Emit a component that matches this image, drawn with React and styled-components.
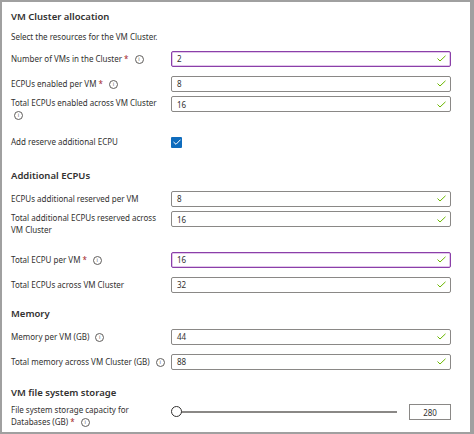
import React from "react";
import styled, { createGlobalStyle } from "styled-components";

const G = createGlobalStyle`
  html,body{margin:0;padding:0;background:#fff;}
  body{font-family:"Noto Sans","Open Sans",sans-serif;color:#323130;}
`;
const Frame = styled.div`
  width:474px;height:434px;box-sizing:border-box;background:#fff;
  border:2px solid #a0a0a0;border-right-width:4px;border-bottom-width:2px;overflow:hidden;
  padding:4px 0 0 9px;
`;
const Title = styled.div`
  font-size:9.5px;font-weight:600;height:${p=>p.h||20}px;display:flex;align-items:center;
  margin-top:${p=>p.mt||0}px;
`;
const Desc = styled.div`font-size:8px;height:20px;display:flex;align-items:center;`;
const Row = styled.div`
  display:grid;grid-template-columns:160px 280px;align-items:${p=>p.top?"start":"center"};
  height:${p=>p.h||25}px;
`;
const Label = styled.div`font-size:8px;line-height:12px;padding-top:${p=>p.pt||0}px;`;
const Star = styled.span`color:#a4262c;margin-left:2px;`;
const Info = styled.span`
  display:inline-flex;width:7px;height:7px;border:1px solid #605e5c;border-radius:50%;
  font-size:5.5px;line-height:7px;justify-content:center;margin-left:6px;vertical-align:middle;color:#605e5c;
`;
const Input = styled.div`
  height:16px;box-sizing:border-box;border:1px solid ${p=>p.focus?"#8a3fa8":"#8a8886"};
  ${p=>p.focus?"box-shadow:inset 0 0 0 0.5px #c68fd8;":""}
  border-radius:2px;display:flex;align-items:center;justify-content:space-between;
  padding:0 4px 0 5px;font-size:8px;
`;
const Check = () => (
  <svg width="9" height="7" viewBox="0 0 9 7"><path d="M0.5 3.5 L3 6 L8.5 0.8" fill="none" stroke="#6bb700" strokeWidth="1"/></svg>
);
const Box = styled.div`width:11px;height:11px;background:#0f6cbd;border-radius:1px;display:flex;align-items:center;justify-content:center;`;
const Slider = styled.div`display:flex;align-items:center;gap:12px;`;
const Track = styled.div`position:relative;width:222px;height:2px;background:#8a8886;margin-left:4px;`;
const Thumb = styled.div`position:absolute;left:-4px;top:-5px;width:9px;height:9px;border:1px solid #323130;border-radius:50%;background:#fff;`;
const Num = styled.div`width:42px;height:16px;border:1px solid #8a8886;box-sizing:border-box;font-size:8px;display:flex;align-items:center;justify-content:center;`;

const I = () => <Info>i</Info>;
const Field = ({label, v, focus, h, two}) => (
  <Row h={h} top={two}>
    <Label pt={two?1:0}>{label}</Label>
    <Input focus={focus}>{v}<Check/></Input>
  </Row>
);

export default function App(){
  return <Frame><G/>
    <Title>VM Cluster allocation</Title>
    <Desc>Select the resources for the VM Cluster.</Desc>
    <Field label={<>Number of VMs in the Cluster<Star>*</Star><I/></>} v="2" focus/>
    <Field label={<>ECPUs enabled per VM<Star>*</Star><I/></>} v="8"/>
    <Field two h={31} label={<>Total ECPUs enabled across VM Cluster<br/><Info style={{marginLeft:3}}>i</Info></>} v="16"/>
    <Row h={30}><Label>Add reserve additional ECPU</Label><Box><svg width="8" height="6" viewBox="0 0 8 6"><path d="M0.5 3 L3 5.3 L7.5 0.7" fill="none" stroke="#fff" strokeWidth="1"/></svg></Box></Row>
    <Title mt={7} h={22}>Additional ECPUs</Title>
    <Field label="ECPUs additional reserved per VM" v="8"/>
    <Field two h={36} label={<>Total additional ECPUs reserved across<br/>VM Cluster</>} v="16"/>
    <Field label={<>Total ECPU per VM<Star>*</Star><I/></>} v="16" focus/>
    <Field label="Total ECPUs across VM Cluster" v="32"/>
    <Title mt={5} h={22}>Memory</Title>
    <Field label={<>Memory per VM (GB)<I/></>} v="44"/>
    <Field label={<>Total memory across VM Cluster (GB)<I/></>} v="88"/>
    <Title mt={6} h={24}>VM file system storage</Title>
    <Row top h={30}>
      <Label>File system storage capacity for<br/>Databases (GB)<Star>*</Star><I/></Label>
      <Slider><Track><Thumb/></Track><Num>280</Num></Slider>
    </Row>
  </Frame>;
}
